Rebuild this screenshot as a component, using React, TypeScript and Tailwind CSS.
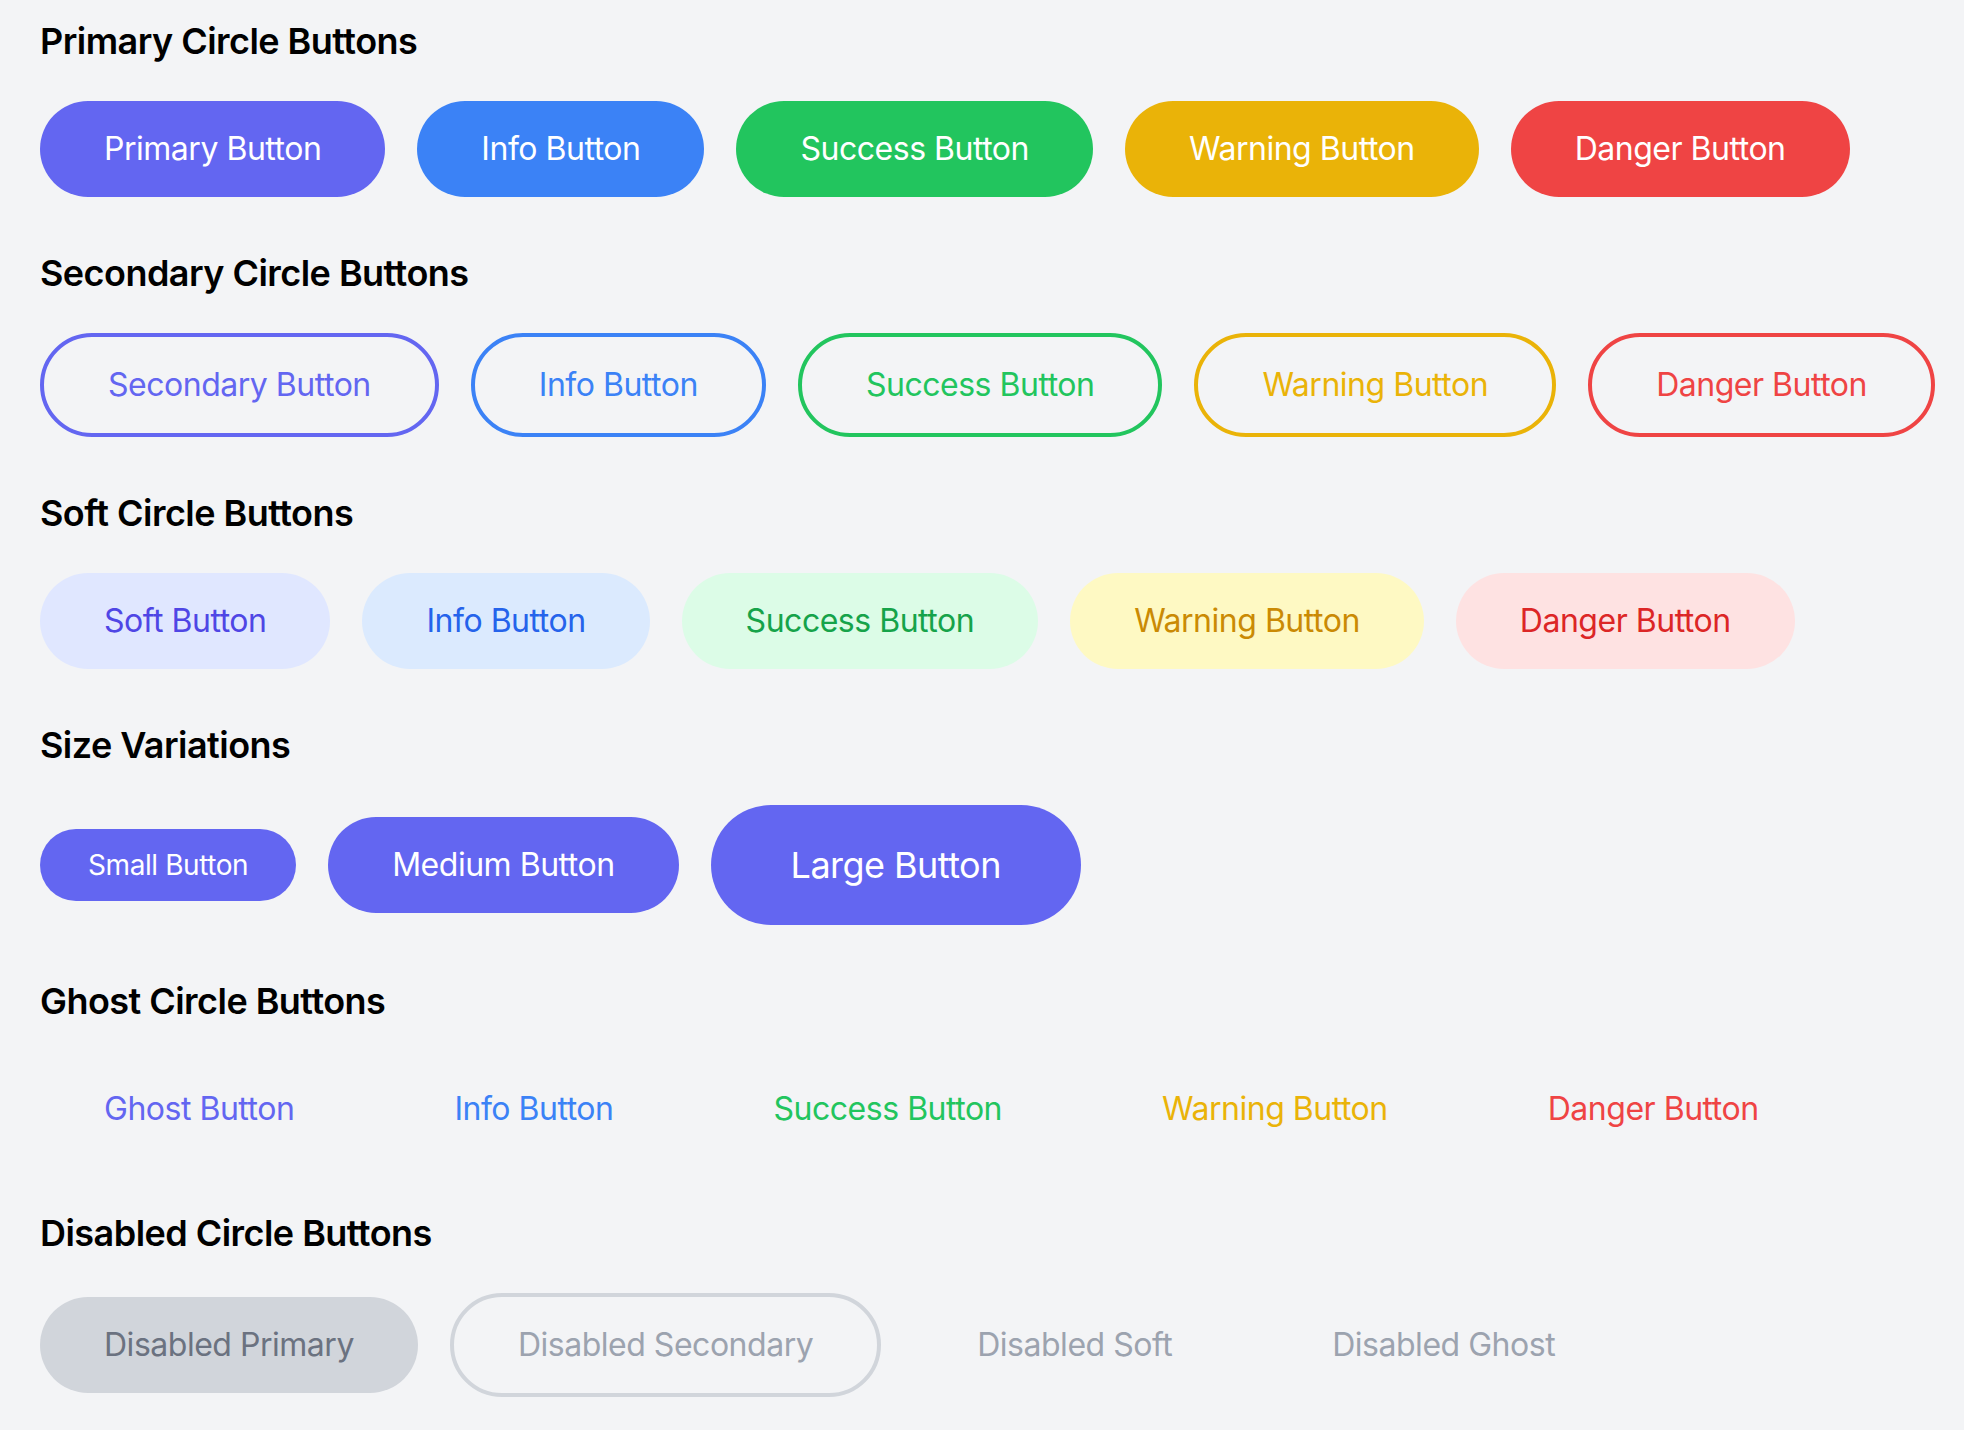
type Variant = 'primary' | 'secondary' | 'soft' | 'ghost';
type Tone = 'indigo' | 'blue' | 'green' | 'yellow' | 'red';

// v3-style palette, written as hex so the shades match the screenshot
const styles: Record<Variant, Record<Tone, string>> = {
  primary: {
    indigo: 'bg-[#6366f1] text-white',
    blue: 'bg-[#3b82f6] text-white',
    green: 'bg-[#22c55e] text-white',
    yellow: 'bg-[#eab308] text-white',
    red: 'bg-[#ef4444] text-white',
  },
  secondary: {
    indigo: 'border-4 border-[#6366f1] text-[#6366f1]',
    blue: 'border-4 border-[#3b82f6] text-[#3b82f6]',
    green: 'border-4 border-[#22c55e] text-[#22c55e]',
    yellow: 'border-4 border-[#eab308] text-[#eab308]',
    red: 'border-4 border-[#ef4444] text-[#ef4444]',
  },
  soft: {
    indigo: 'bg-[#e0e7ff] text-[#4f46e5]',
    blue: 'bg-[#dbeafe] text-[#2563eb]',
    green: 'bg-[#dcfce7] text-[#16a34a]',
    yellow: 'bg-[#fef9c3] text-[#ca8a04]',
    red: 'bg-[#fee2e2] text-[#dc2626]',
  },
  ghost: {
    indigo: 'text-[#6366f1]',
    blue: 'text-[#3b82f6]',
    green: 'text-[#22c55e]',
    yellow: 'text-[#eab308]',
    red: 'text-[#ef4444]',
  },
};

const tones: Tone[] = ['indigo', 'blue', 'green', 'yellow', 'red'];
const restLabels = ['Info Button', 'Success Button', 'Warning Button', 'Danger Button'];

function CircleButton({ label, className }: { label: string; className: string }) {
  return (
    <button
      type="button"
      className={`shrink-0 whitespace-nowrap rounded-full px-16 py-6 text-[32px] leading-[48px] tracking-[-0.015em] ${className}`}
    >
      {label}
    </button>
  );
}

function Section({ title, children, last }: { title: string; children: React.ReactNode; last?: boolean }) {
  return (
    <section className={last ? '' : 'mb-12'}>
      <h2 className="mb-8 text-[36px] font-semibold leading-[56px] tracking-[-0.015em] text-black">{title}</h2>
      <div className="flex items-center gap-8">{children}</div>
    </section>
  );
}

function ToneRow({ variant, first }: { variant: Variant; first: string }) {
  const labels = [first, ...restLabels];
  return (
    <>
      {tones.map((tone, i) => (
        <CircleButton key={tone} label={labels[i]} className={styles[variant][tone]} />
      ))}
    </>
  );
}

export default function App() {
  return (
    <div className="min-h-screen bg-[#f3f4f6] pl-10 pt-[13px] pb-8 font-['Inter','Noto_Sans',sans-serif]">
      <Section title="Primary Circle Buttons">
        <ToneRow variant="primary" first="Primary Button" />
      </Section>

      <Section title="Secondary Circle Buttons">
        <ToneRow variant="secondary" first="Secondary Button" />
      </Section>

      <Section title="Soft Circle Buttons">
        <ToneRow variant="soft" first="Soft Button" />
      </Section>

      <Section title="Size Variations">
        <button type="button" className="whitespace-nowrap rounded-full bg-[#6366f1] px-12 py-4 text-[28px] leading-[40px] tracking-[-0.015em] text-white">
          Small Button
        </button>
        <button type="button" className="whitespace-nowrap rounded-full bg-[#6366f1] px-16 py-6 text-[32px] leading-[48px] tracking-[-0.015em] text-white">
          Medium Button
        </button>
        <button type="button" className="whitespace-nowrap rounded-full bg-[#6366f1] px-20 py-8 text-[36px] leading-[56px] tracking-[-0.015em] text-white">
          Large Button
        </button>
      </Section>

      <Section title="Ghost Circle Buttons">
        <ToneRow variant="ghost" first="Ghost Button" />
      </Section>

      <Section title="Disabled Circle Buttons" last>
        <CircleButton label="Disabled Primary" className="cursor-not-allowed bg-[#d1d5db] text-[#6b7280]" />
        <CircleButton label="Disabled Secondary" className="cursor-not-allowed border-4 border-[#d1d5db] text-[#9ca3af]" />
        <CircleButton label="Disabled Soft" className="cursor-not-allowed bg-[#f3f4f6] text-[#9ca3af]" />
        <CircleButton label="Disabled Ghost" className="cursor-not-allowed text-[#9ca3af]" />
      </Section>
    </div>
  );
}
